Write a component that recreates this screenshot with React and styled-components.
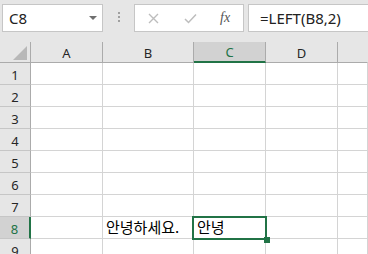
import React from 'react';
import styled, { createGlobalStyle } from 'styled-components';

const GREEN = '#217346';

const GlobalStyle = createGlobalStyle`
  html, body {
    margin: 0;
    padding: 0;
    background: #ffffff;
    overflow: hidden;
  }
  body {
    font-family: "Segoe UI", "Noto Sans", "Noto Sans CJK KR", sans-serif;
  }
`;

const Window = styled.div`
  width: 368px;
  height: 254px;
  overflow: hidden;
  background: #e6e6e6;
`;

const Toolbar = styled.div`
  display: flex;
  align-items: flex-start;
  height: 42px;
  padding: 4px 0 0 2px;
  box-sizing: border-box;
`;

const NameBox = styled.div`
  display: flex;
  align-items: center;
  justify-content: space-between;
  width: 101px;
  height: 28px;
  box-sizing: border-box;
  background: #fff;
  border: 1px solid #c6c6c6;
  padding: 0 5px 0 6px;
  font-size: 15px;
  color: #222;
`;

const Caret = styled.span`
  width: 0;
  height: 0;
  border-left: 4px solid transparent;
  border-right: 4px solid transparent;
  border-top: 4px solid #6f6f6f;
`;

const Dots = styled.div`
  display: flex;
  flex-direction: column;
  gap: 2px;
  width: 31px;
  align-items: center;
  padding-top: 8px;

  span {
    width: 2px;
    height: 2px;
    background: #a0a0a0;
  }
`;

const IconBox = styled.div`
  display: flex;
  align-items: center;
  width: 110px;
  height: 28px;
  box-sizing: border-box;
  background: #fff;
  border: 1px solid #c6c6c6;
  padding-left: 13px;
  gap: 25px;
`;

const Fx = styled.span`
  font-family: "Liberation Serif", serif;
  font-style: italic;
  font-size: 14px;
  color: #555;
  margin-left: -2px;
`;

const FormulaBox = styled.div`
  flex: 1;
  margin-left: 4px;
  height: 28px;
  box-sizing: border-box;
  background: #fff;
  border: 1px solid #c6c6c6;
  border-right: none;
  display: flex;
  align-items: center;
  padding-left: 11px;
  font-size: 15px;
  color: #222;
`;

const Sheet = styled.div`
  display: grid;
  grid-template-columns: 31px 72px 91px 72px 72px 1fr;
  grid-auto-rows: 22px;
  grid-template-rows: 21px;
  background: #fff;
`;

const Corner = styled.div`
  position: relative;
  background: #e6e6e6;
  border-right: 1px solid #ababab;
  border-bottom: 1px solid #ababab;

  svg {
    position: absolute;
    right: 3px;
    bottom: 2px;
  }
`;

const ColHead = styled.div`
  display: flex;
  align-items: center;
  justify-content: center;
  background: ${(p) => (p.$active ? '#d2d2d2' : '#e6e6e6')};
  border-right: 1px solid ${(p) => (p.$last ? 'transparent' : '#ababab')};
  border-bottom: ${(p) => (p.$active ? `2px solid ${GREEN}` : '1px solid #ababab')};
  color: ${(p) => (p.$active ? GREEN : '#262626')};
  font-size: 13px;
  padding-top: 1px;
`;

const RowHead = styled.div`
  display: flex;
  align-items: center;
  justify-content: center;
  background: ${(p) => (p.$active ? '#d2d2d2' : '#e6e6e6')};
  border-right: ${(p) => (p.$active ? `2px solid ${GREEN}` : '1px solid #ababab')};
  border-bottom: 1px solid #c6c6c6;
  color: ${(p) => (p.$active ? GREEN : '#262626')};
  font-size: 13px;
  padding-top: 2px;
`;

const Cell = styled.div`
  position: relative;
  display: flex;
  align-items: flex-end;
  border-right: 1px solid #d4d4d4;
  border-bottom: 1px solid #d4d4d4;
  padding: 0 0 1px 3px;
  font-family: "Noto Sans CJK KR", "Noto Sans", sans-serif;
  font-size: 15px;
  line-height: 20px;
  color: #000;
  white-space: nowrap;
  overflow: visible;
`;

const Selection = styled.div`
  position: absolute;
  z-index: 2;
  top: -1px;
  left: -2px;
  right: -2px;
  bottom: -2px;
  border: 2px solid ${GREEN};
  pointer-events: none;
`;

const Handle = styled.div`
  position: absolute;
  right: -5px;
  bottom: -5px;
  width: 6px;
  height: 6px;
  background: ${GREEN};
`;

const columns = ['A', 'B', 'C', 'D', ''];
const rows = [1, 2, 3, 4, 5, 6, 7, 8, 9];

const cellText = {
  B8: '안녕하세요.',
  C8: '안녕'
};

export default function App() {
  return (
    <>
      <GlobalStyle />
      <Window>
        <Toolbar>
          <NameBox>
            C8
            <Caret />
          </NameBox>
          <Dots>
            <span />
            <span />
            <span />
          </Dots>
          <IconBox>
            <svg width="11" height="11" viewBox="0 0 11 11">
              <path d="M1 1 L10 10 M10 1 L1 10" stroke="#bdbdbd" strokeWidth="1.4" fill="none" />
            </svg>
            <svg width="13" height="11" viewBox="0 0 13 11">
              <path d="M1 6 L4.5 9.5 L12 1.5" stroke="#bdbdbd" strokeWidth="1.5" fill="none" />
            </svg>
            <Fx>fx</Fx>
          </IconBox>
          <FormulaBox>=LEFT(B8,2)</FormulaBox>
        </Toolbar>
        <Sheet>
          <Corner>
            <svg width="14" height="14" viewBox="0 0 14 14">
              <path d="M14 0 L14 14 L0 14 Z" fill="#b8b8b8" />
            </svg>
          </Corner>
          {columns.map((c, i) => (
            <ColHead key={i} $active={c === 'C'} $last={c === ''}>
              {c}
            </ColHead>
          ))}
          {rows.map((r) => (
            <React.Fragment key={r}>
              <RowHead $active={r === 8}>{r}</RowHead>
              {columns.map((c, i) => {
                const id = c + r;
                return (
                  <Cell key={i}>
                    {cellText[id]}
                    {id === 'C8' && (
                      <Selection>
                        <Handle />
                      </Selection>
                    )}
                  </Cell>
                );
              })}
            </React.Fragment>
          ))}
        </Sheet>
      </Window>
    </>
  );
}
